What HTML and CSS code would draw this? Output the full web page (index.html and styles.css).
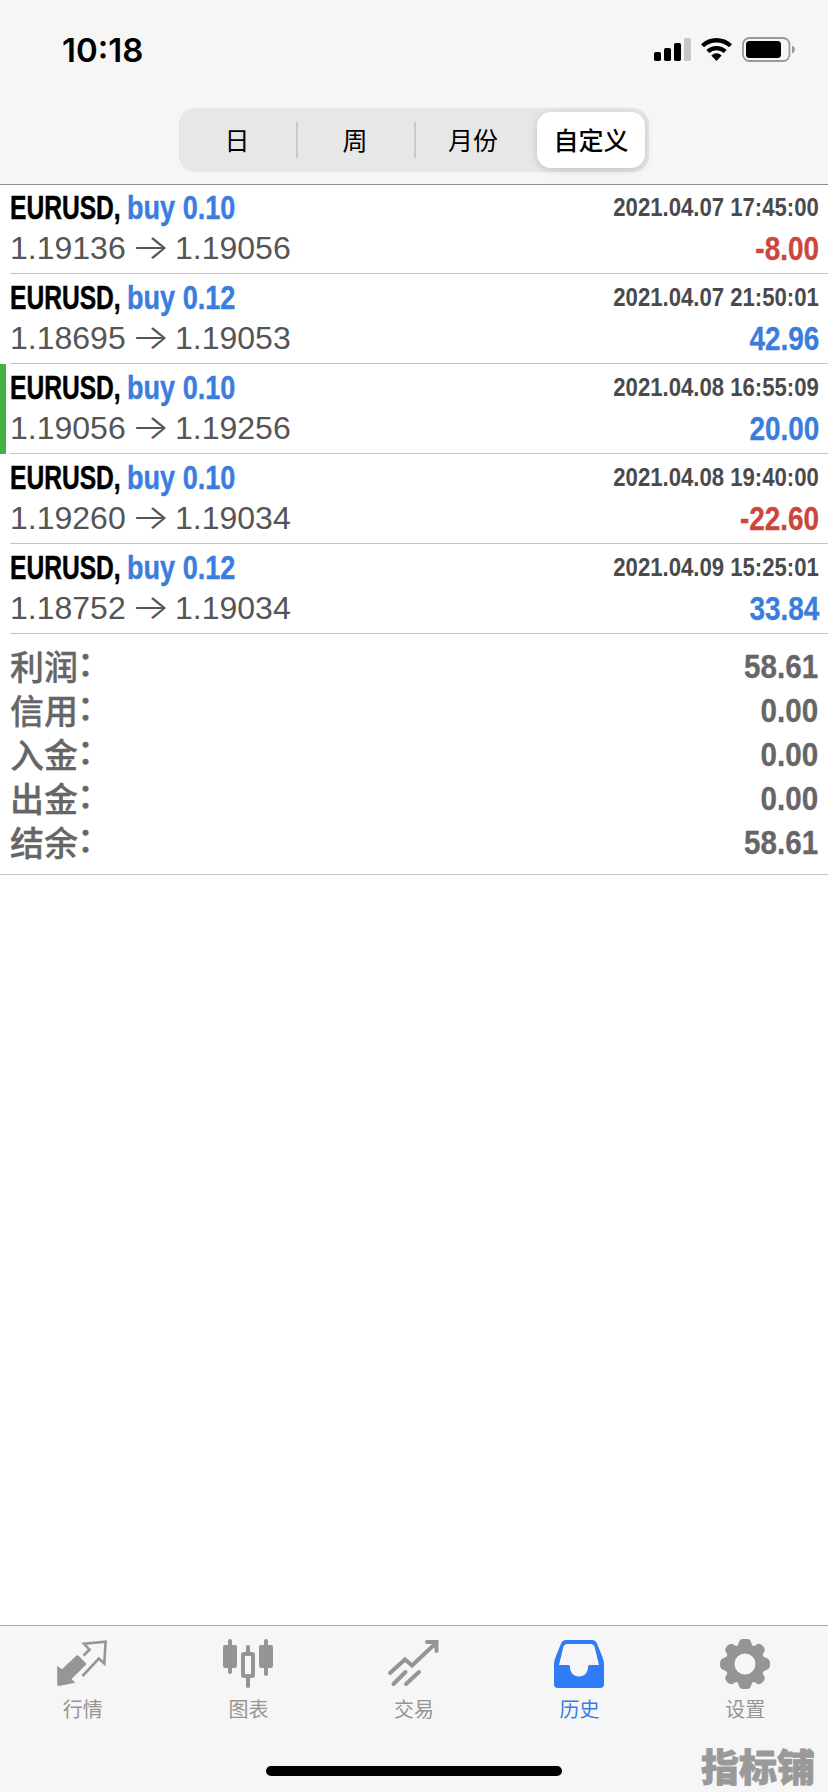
FILE: index.html
```
<!DOCTYPE html>
<html lang="zh-CN">
<head>
<meta charset="utf-8">
<title>历史</title>
<link rel="stylesheet" href="styles.css">
</head>
<body>
<div class="app">
  <header class="header">
    <div class="status">
      <span class="clock">10:18</span>
      <svg class="status-icons" width="144" height="28" viewBox="0 0 144 28">
        <rect x="2" y="16" width="7" height="9" rx="1.8"/>
        <rect x="12" y="12" width="7" height="13" rx="1.8"/>
        <rect x="22" y="7" width="7" height="18" rx="1.8"/>
        <rect x="32" y="2" width="7" height="23" rx="1.8" fill="#c6c6c6"/>
        <path d="M50.5 9.8A20.5 20.5 0 0 1 78.500 9.800M55.800 15.500A12.800 12.800 0 0 1 73.200 15.500" fill="none" stroke="#000" stroke-width="4.300"/>
        <path d="M59.300 19.500Q64.500 15.200 69.700 19.500L64.500 25Z"/>
        <rect x="91" y="2" width="46.500" height="23" rx="6.500" fill="none" stroke="#999" stroke-width="1.800"/>
        <rect x="94" y="5" width="35" height="17" rx="3.500"/>
        <path d="M140 9.500Q143 11 143 13.500T140 17.500Z" fill="#999"/>
      </svg>
    </div>
    <div class="segments">
      <span class="segment first">日</span>
      <span class="segment divided">周</span>
      <span class="segment divided">月份</span>
      <span class="segment selected">自定义</span>
    </div>
  </header>

  <main class="history">
    <section class="deal">
      <div class="line top"><span class="symbol">EURUSD,</span><span class="side">buy 0.10</span><span class="time">2021.04.07 17:45:00</span></div>
      <div class="line"><span class="price">1.19136</span><span class="arrow">→</span><span class="price">1.19056</span><span class="profit loss">-8.00</span></div>
    </section>
    <section class="deal">
      <div class="line top"><span class="symbol">EURUSD,</span><span class="side">buy 0.12</span><span class="time">2021.04.07 21:50:01</span></div>
      <div class="line"><span class="price">1.18695</span><span class="arrow">→</span><span class="price">1.19053</span><span class="profit">42.96</span></div>
    </section>
    <section class="deal marked">
      <div class="line top"><span class="symbol">EURUSD,</span><span class="side">buy 0.10</span><span class="time">2021.04.08 16:55:09</span></div>
      <div class="line"><span class="price">1.19056</span><span class="arrow">→</span><span class="price">1.19256</span><span class="profit">20.00</span></div>
    </section>
    <section class="deal">
      <div class="line top"><span class="symbol">EURUSD,</span><span class="side">buy 0.10</span><span class="time">2021.04.08 19:40:00</span></div>
      <div class="line"><span class="price">1.19260</span><span class="arrow">→</span><span class="price">1.19034</span><span class="profit loss">-22.60</span></div>
    </section>
    <section class="deal">
      <div class="line top"><span class="symbol">EURUSD,</span><span class="side">buy 0.12</span><span class="time">2021.04.09 15:25:01</span></div>
      <div class="line"><span class="price">1.18752</span><span class="arrow">→</span><span class="price">1.19034</span><span class="profit">33.84</span></div>
    </section>

    <section class="summary">
      <div class="total"><span class="label">利润<span class="colon">：</span></span><span class="amount">58.61</span></div>
      <div class="total"><span class="label">信用<span class="colon">：</span></span><span class="amount">0.00</span></div>
      <div class="total"><span class="label">入金<span class="colon">：</span></span><span class="amount">0.00</span></div>
      <div class="total"><span class="label">出金<span class="colon">：</span></span><span class="amount">0.00</span></div>
      <div class="total"><span class="label">结余<span class="colon">：</span></span><span class="amount">58.61</span></div>
    </section>
  </main>

  <nav class="tabbar">
    <div class="tab">
      <svg width="52" height="52" viewBox="0 0 52 52">
        <path d="M0.200 27.700L5 31.300L19.500 17.500Q20.500 16.700 21.500 17.700L28.800 25Q29.700 26 28.800 27L14.500 41L18.200 44.700L2 48Q0.200 48 0.200 46Z"/>
        <path d="M26.500 17.500L32.500 11.700L27 5.800L48.600 3.800L47.300 25.500L41.800 20.500L25.500 38" fill="none" stroke="#959595" stroke-width="2.600"/>
      </svg>
      <span>行情</span>
    </div>
    <div class="tab">
      <svg width="52" height="52" viewBox="0 0 52 52">
        <rect x="1" y="7" width="14" height="23" rx="2"/><rect x="6" y="1" width="4" height="35" rx="2"/>
        <rect x="37" y="7" width="14" height="23" rx="2"/><rect x="42" y="1" width="4" height="37" rx="2"/>
        <rect x="21" y="16" width="10" height="22" rx="1" fill="none" stroke="#959595" stroke-width="4"/>
        <rect x="24" y="7" width="4" height="9" rx="2"/><rect x="24" y="38" width="4" height="12" rx="2"/>
      </svg>
      <span>图表</span>
    </div>
    <div class="tab">
      <svg width="52" height="52" viewBox="0 0 52 52">
        <g fill="none" stroke="#959595" stroke-width="4" stroke-linecap="round">
          <path d="M2 35L17 21.500L24 27.500L48 5"/><path d="M39 4H48.500V13"/>
          <path d="M17.500 34L5.500 46M31 34L18 46"/>
        </g>
      </svg>
      <span>交易</span>
    </div>
    <div class="tab active">
      <svg width="52" height="52" viewBox="0 0 52 52">
        <path fill-rule="evenodd" d="M12 2H38Q41.500 2 43 5.500L48 18Q50 22 50 26V46Q50 50 46 50H4Q0 50 0 46V26Q0 22 2 18L7 5.500Q8.500 2 12 2ZM13 6Q10.500 6 9.500 8.500L5 27H14.500Q16 27 16 29C16 34.500 19.500 38.500 25 38.500S34 34.500 34 29Q34 27 35.500 27H45L40.500 8.500Q39.500 6 37 6Z"/>
      </svg>
      <span>历史</span>
    </div>
    <div class="tab">
      <svg width="52" height="52" viewBox="0 0 52 52">
        <path fill-rule="evenodd" d="M23 1H29Q31 1 32 4L33 7Q34 8.500 36 7.500L38.500 6Q41 5 44 8Q46.500 11 45.500 13L44 16Q43.500 18 45 19L48.500 20.500Q51 21.500 51 26T48.500 31.500L45 33Q43.500 34 44 36L45.500 39Q46.500 41 44 44Q41 47 38.500 46L36 44.500Q34 43.500 33 45L32 48Q31 51 29 51H23Q21 51 20 48L19 45Q18 43.500 16 44.500L13.500 46Q11 47 8 44Q5.500 41 6.500 39L8 36Q8.500 34 7 33L3.500 31.500Q1 30.500 1 26T3.500 20.500L7 19Q8.500 18 8 16L6.500 13Q5.500 11 8 8Q11 5 13.500 6L16 7.500Q18 8.500 19 7L20 4Q21 1 23 1ZM26 15.500A10.500 10.500 0 1 0 26 36.500A10.500 10.500 0 1 0 26 15.500Z"/>
      </svg>
      <span>设置</span>
    </div>
    <div class="home-indicator"></div>
    <div class="watermark">指标铺</div>
  </nav>
</div>
</body>
</html>
```
FILE: styles.css
```
* { box-sizing: border-box; }
body {
  margin: 0;
  background: #fff;
  font-family: "Liberation Sans", "Noto Sans CJK SC", sans-serif;
}
.app { width: 828px; height: 1792px; display: flex; flex-direction: column; overflow: hidden; }

.header {
  height: 185px;
  flex: none;
  background: #f6f6f6;
  border-bottom: 1px solid #8c8c8c;
  display: flex;
  flex-direction: column;
  align-items: center;
}
.status {
  width: 100%;
  height: 108px;
  padding: 36px 32px 0 62px;
  display: flex;
  justify-content: space-between;
}
.clock { font: 600 33px/29px Inter, sans-serif; }
.segments {
  width: 470px;
  height: 64px;
  padding: 4px;
  border-radius: 16px;
  background: #e7e7e7;
  display: grid;
  grid-template-columns: 113px 118px 118px 113px;
  align-items: center;
  font: 400 25px/54px "Noto Sans CJK SC", sans-serif;
  text-align: center;
}
.segment { height: 56px; }
.first { padding-right: 5px; }
.divided { background: linear-gradient(#c9c9cd, #c9c9cd) 0 50% / 2px 36px no-repeat; }
.selected {
  margin-left: 5px;
  background: #fff;
  border-radius: 14px;
  font-weight: 500;
  box-shadow: 0 2px 8px rgba(0, 0, 0, .16);
}

.history { flex: 1; margin-top: -1px; }
.deal {
  height: 90px;
  padding: 0 10px;
  background: linear-gradient(#c4c4c6, #c4c4c6) 10px 100% / 818px 1px no-repeat;
}
.deal:first-child { height: 89px; margin-top: 1px; }
.deal:first-child .top { height: 45px; line-height: 45px; }
.marked { box-shadow: inset 6px 0 #43b244; }
.line { display: flex; height: 36px; line-height: 36px; white-space: nowrap; }
.top { height: 46px; line-height: 47px; font-weight: 700; font-size: 33px; }
.symbol { width: 117px; -webkit-text-stroke: .5px; transform: scaleX(.745); transform-origin: 0 50%; }
.side { width: 110px; color: #3b7ddd; -webkit-text-stroke: .4px; transform: scaleX(.82); transform-origin: 0 50%; }
.time { margin-left: auto; font-size: 25.500px; color: #4a4a4c; transform: translateX(1px) scaleX(.868); transform-origin: 100% 50%; }
.price { width: 114px; font-size: 32px; color: #555; }
.arrow { width: 51px; text-align: center; font: 300 34px/34px Inter, sans-serif; color: #555; transform: translateX(1px) scaleX(1.2); }
.profit {
  margin-left: auto;
  font-size: 32.500px;
  line-height: 38px;
  font-weight: 700;
  color: #3b7ddd;
  -webkit-text-stroke: .3px;
  transform: translateX(1px) scaleX(.86);
  transform-origin: 100% 50%;
}
.loss { color: #cb473c; }

.summary { height: 241px; padding: 10px; border-bottom: 1px solid #c4c4c6; }
.total {
  height: 44px;
  display: flex;
  justify-content: space-between;
  font: 500 34px/43px "Noto Sans CJK SC", sans-serif;
  color: #666;
}
.label { -webkit-text-stroke: .3px; }
.colon { display: inline-block; transform: translate(-1px, -4px); }
.amount { font: 700 34px/44px "Liberation Sans", sans-serif; -webkit-text-stroke: .3px; transform: scaleX(.87); transform-origin: 100% 50%; }

.tabbar {
  position: relative;
  height: 167px;
  flex: none;
  padding-top: 12px;
  background: #f6f6f6;
  border-top: 1px solid #a9a9a9;
  display: grid;
  grid-template-columns: repeat(5, 1fr);
}
.tab {
  display: flex;
  flex-direction: column;
  align-items: center;
  font: 400 20px/30px "Noto Sans CJK SC", sans-serif;
  color: #959595;
}
.tab svg { fill: #959595; overflow: visible; }
.tab span { margin-top: 4px; }
.tab.active { color: #3b7ddd; }
.tab.active svg { fill: #2f7cf6; }
.home-indicator {
  position: absolute;
  left: 266px;
  bottom: 16px;
  width: 296px;
  height: 10px;
  border-radius: 5px;
  background: #000;
}
.watermark {
  position: absolute;
  right: 13px;
  bottom: 7px;
  font: 900 38px/40px "Noto Sans CJK SC", sans-serif;
  color: #999;
  -webkit-text-stroke: .8px;
}
```
